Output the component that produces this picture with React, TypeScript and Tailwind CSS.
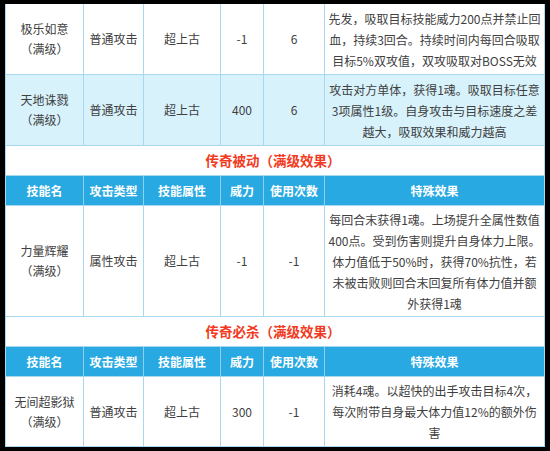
import React from "react";

const cols = "grid grid-cols-[79px_60px_77px_43px_61px_220px]";
const cell =
  "flex items-center justify-center text-center border-r border-[#a8d8ef] leading-[20px]";

type Row = {
  name: string;
  type: string;
  attr: string;
  power: string;
  uses: string;
  effect: string[];
  h: string;
  bg: string;
};

const HeaderRow = () => (
  <div className={`${cols} h-[30px] bg-[#29a9e1] border-b border-[#a8d8ef] text-white font-bold`}>
    {["技能名", "攻击类型", "技能属性", "威力", "使用次数", "特殊效果"].map((t, i) => (
      <div
        key={t}
        className={`flex items-center justify-center border-r ${
          i === 5 ? "border-[#a8d8ef]" : "border-[#8fd0ef]"
        } ${i === 0 ? "border-l border-l-[#a8d8ef]" : ""}`}
      >
        {t}
      </div>
    ))}
  </div>
);

const Title = ({ text }: { text: string }) => (
  <div className="h-[30px] bg-white border-b border-l border-r border-[#a8d8ef] flex items-center justify-center pr-[4px] text-[13.5px] font-bold text-[#f23a22]">
    {text}
  </div>
);

const DataRow = ({ r }: { r: Row }) => (
  <div className={`${cols} ${r.h} ${r.bg} border-b border-[#a8d8ef] text-[#404040]`}>
    <div className={`${cell} border-l flex-col`}>
      <span>{r.name}</span>
      <span>（满级）</span>
    </div>
    <div className={cell}>{r.type}</div>
    <div className={cell}>{r.attr}</div>
    <div className={cell}>{r.power}</div>
    <div className={cell}>{r.uses}</div>
    <div className={`${cell} flex-col leading-[21px]`}>
      {r.effect.map((l, i) => (
        <span key={i} className="whitespace-nowrap">
          {l}
        </span>
      ))}
    </div>
  </div>
);

const top: Row[] = [
  {
    name: "极乐如意",
    type: "普通攻击",
    attr: "超上古",
    power: "-1",
    uses: "6",
    effect: [
      "先发，吸取目标技能威力200点并禁止回",
      "血，持续3回合。持续时间内每回合吸取",
      "目标5%双攻值，双攻吸取对BOSS无效",
    ],
    h: "h-[71px]",
    bg: "bg-white",
  },
  {
    name: "天地诛戮",
    type: "普通攻击",
    attr: "超上古",
    power: "400",
    uses: "6",
    effect: [
      "攻击对方单体，获得1魂。吸取目标任意",
      "3项属性1级。自身攻击与目标速度之差",
      "越大，吸取效果和威力越高",
    ],
    h: "h-[71px]",
    bg: "bg-[#d7f2fb]",
  },
];

const passive: Row = {
  name: "力量辉耀",
  type: "属性攻击",
  attr: "超上古",
  power: "-1",
  uses: "-1",
  effect: [
    "每回合末获得1魂。上场提升全属性数值",
    "400点。受到伤害则提升自身体力上限。",
    "体力值低于50%时，获得70%抗性，若",
    "未被击败则回合末回复所有体力值并额",
    "外获得1魂",
  ],
  h: "h-[111px]",
  bg: "bg-white",
};

const ultimate: Row = {
  name: "无间超影狱",
  type: "普通攻击",
  attr: "超上古",
  power: "300",
  uses: "-1",
  effect: ["消耗4魂。以超快的出手攻击目标4次，", "每次附带自身最大体力值12%的额外伤", "害"],
  h: "h-[70px]",
  bg: "bg-white",
};

export default function App() {
  return (
    <div
      className="w-[550px] h-[451px] bg-black pt-[4px] pl-[5px] overflow-hidden text-[12px]"
      style={{ fontFamily: '"Noto Sans CJK SC", "Liberation Sans", sans-serif' }}
    >
      <div className="w-[540px]">
        {top.map((r) => (
          <DataRow key={r.name} r={r} />
        ))}
        <Title text="传奇被动（满级效果）" />
        <HeaderRow />
        <DataRow r={passive} />
        <Title text="传奇必杀（满级效果）" />
        <HeaderRow />
        <DataRow r={ultimate} />
      </div>
    </div>
  );
}
